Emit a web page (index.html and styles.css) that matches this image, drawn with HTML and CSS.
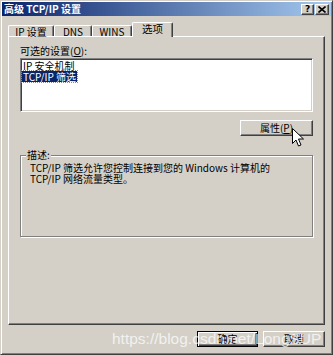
FILE: index.html
```html
<!DOCTYPE html>
<html lang="zh-CN">
<head>
<meta charset="utf-8">
<title>高级 TCP/IP 设置</title>
<link rel="stylesheet" href="styles.css">
</head>
<body>
<div class="window">
  <div class="titlebar">
    <span class="title">高级 TCP/IP 设置</span>
    <div class="tb-buttons">
      <span class="tb-btn help">?</span>
      <span class="tb-btn close"><svg width="8" height="7" viewBox="0 0 8 7"><path d="M0.5 0.5 L7.5 6.5 M7.5 0.5 L0.5 6.5" stroke="#000" stroke-width="1.6" fill="none"/></svg></span>
    </div>
  </div>
  <div class="body">
    <div class="tabs">
      <div class="tab t1">IP 设置</div>
      <div class="tab t2">DNS</div>
      <div class="tab t3">WINS</div>
      <div class="tab t4 active">选项</div>
    </div>
    <div class="panel">
      <div class="label">可选的设置(<u>O</u>):</div>
      <div class="listbox">
        <div class="item"><span>IP 安全机制</span></div>
        <div class="item sel"><span>TCP/IP 筛选</span></div>
      </div>
      <div class="prop-row"><div class="btn prop">属性(<u>P</u>)</div></div>
      <div class="group">
        <span class="group-label">描述:</span>
        <p class="desc">TCP/IP 筛选允许您控制连接到您的 Windows 计算机的<br>TCP/IP 网络流量类型。</p>
      </div>
    </div>
    <div class="footer">
      <div class="btn default">确定</div>
      <div class="btn cancel">取消</div>
    </div>
  </div>
  <div class="watermark">https://blog.csdn.net/LongSUP</div>
  <svg class="cursor" width="13" height="20" viewBox="0 0 13 20"><path d="M0.5 0.5 L0.5 15.5 L4 12 L6.5 18 L9 17 L6.5 11 L11.5 11 Z" fill="#fff" stroke="#000" stroke-width="1" stroke-linejoin="miter"/></svg>
</div>
</body>
</html>
```

FILE: styles.css
```css
* { box-sizing: border-box; }
html, body { margin: 0; padding: 0; background: #d4d0c8; }
body {
  font-family: "Noto Sans CJK SC", "DejaVu Sans", sans-serif;
  font-size: 10px;
  color: #000;
}
.window {
  position: relative;
  width: 333px;
  height: 355px;
  background: #d4d0c8;
  border: 1px solid;
  border-color: #d4d0c8 #404040 #404040 #d4d0c8;
  box-shadow: inset 1px 1px #fff, inset -1px -1px #808080;
  padding: 1px;
  display: flex;
  flex-direction: column;
  overflow: hidden;
}
.titlebar {
  height: 14px;
  flex: none;
  background: linear-gradient(to right, #0a246a, #a6caf0);
  display: flex;
  align-items: center;
  justify-content: space-between;
  padding: 0 0 0 2px;
}
.title {
  color: #fff;
  font-weight: bold;
  font-size: 10px;
  line-height: 14px;
  white-space: pre;
}
.tb-buttons { display: flex; gap: 1px; margin-right: 2px; margin-top: 1px; }
.tb-btn {
  width: 13px;
  height: 11px;
  background: #d4d0c8;
  border: 1px solid;
  border-color: #fff #404040 #404040 #fff;
  box-shadow: inset -1px -1px #808080;
  display: flex;
  align-items: center;
  justify-content: center;
  font-family: "DejaVu Sans", sans-serif;
  font-weight: bold;
  font-size: 9px;
  line-height: 9px;
}
.tb-btn.close { width: 14px; }
.body {
  flex: 1;
  display: flex;
  flex-direction: column;
  padding: 6px 6px 6px 6px;
}
.tabs {
  height: 14px;
  display: flex;
  align-items: flex-end;
  flex: none;
  position: relative;
  z-index: 1;
}
.tab {
  height: 11px;
  background: #d4d0c8;
  border-top: 1px solid #fff;
  border-left: 1px solid #fff;
  border-right: 1px solid #404040;
  box-shadow: inset -1px 0 #808080;
  border-radius: 2px 2px 0 0;
  display: flex;
  align-items: center;
  justify-content: center;
  line-height: 10px;
  white-space: pre;
  padding-top: 1px;
}
.t1 { width: 46px; }
.t2 { width: 38px; }
.t3 { width: 40px; }
.t4 { width: 41px; }
.tab.active {
  height: 15px;
  margin-bottom: -1px;
  padding-bottom: 3px;
  font-size: 10.5px;
}
.panel {
  height: 289px;
  flex: none;
  border: 1px solid;
  border-color: #fff #404040 #404040 #fff;
  box-shadow: inset -1px -1px #808080;
  padding: 8px 11px 0 11px;
  display: flex;
  flex-direction: column;
}
.label { height: 11px; line-height: 11px; }
u { text-decoration: underline; }
.listbox {
  margin-top: 2px;
  height: 54px;
  background: #fff;
  border: 1px solid;
  border-color: #808080 #fff #fff #808080;
  box-shadow: inset 1px 1px #404040, inset -1px -1px #d4d0c8;
  padding: 1px;
}
.item { height: 11px; line-height: 11px; padding-left: 0; white-space: pre; }
.item span { display: inline-block; padding: 0 1px; }
.item.sel span { background: #0a246a; color: #fff; outline: 1px dotted #7f8aa6; }
.prop-row { display: flex; justify-content: flex-end; margin-top: 8px; }
.btn {
  height: 16px;
  background: #d4d0c8;
  border: 1px solid;
  border-color: #fff #404040 #404040 #fff;
  box-shadow: inset -1px -1px #808080;
  display: flex;
  align-items: center;
  justify-content: center;
  line-height: 12px;
}
.btn.prop { width: 73px; }
.group {
  position: relative;
  margin-top: 19px;
  height: 82px;
  border: 1px solid #808080;
  box-shadow: inset 1px 1px #fff, 1px 1px #fff;
  padding: 6px 8px 0 9px;
}
.group-label {
  position: absolute;
  top: -7px;
  left: 5px;
  padding: 0 1px;
  background: #d4d0c8;
  line-height: 12px;
}
.desc { margin: 0; line-height: 11px; white-space: pre; }
.footer {
  margin-top: 6px;
  display: flex;
  justify-content: flex-end;
  gap: 5px;
}
.footer .btn { width: 61px; }
.footer .btn.cancel { width: 62px; }
.btn.default {
  border: 1px solid #000;
  box-shadow: inset 1px 1px #fff, inset -1px -1px #404040, inset -2px -2px #808080;
}
.watermark {
  position: absolute;
  left: 111px;
  top: 329px;
  font-family: "Liberation Sans", Arial, sans-serif;
  font-size: 15.5px;
  line-height: 18px;
  color: rgba(255, 255, 255, 0.72);
  white-space: nowrap;
  pointer-events: none;
}
.cursor {
  position: absolute;
  left: 291px;
  top: 127px;
}
```
